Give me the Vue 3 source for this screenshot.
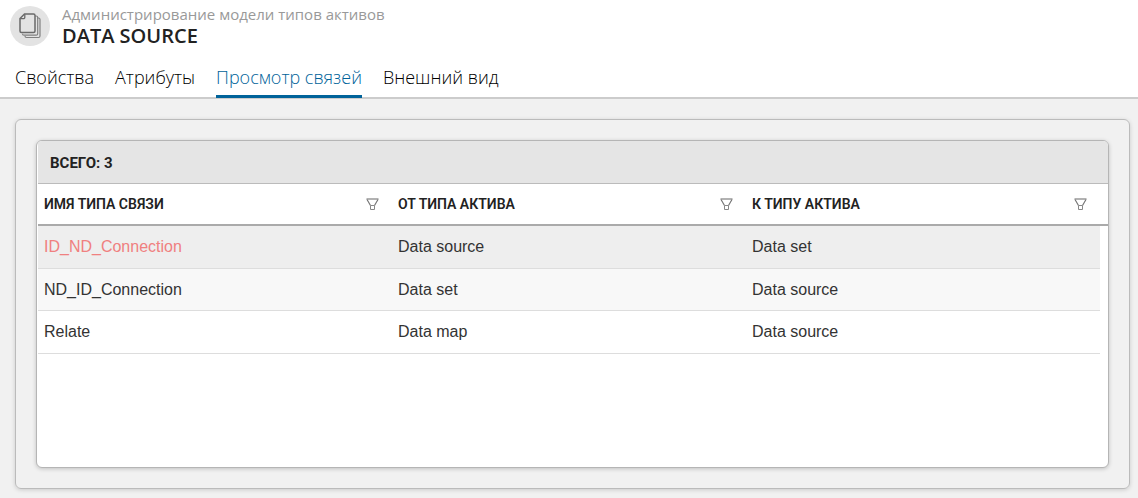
<script setup>
import { ref } from 'vue'

const tabs = ['Свойства', 'Атрибуты', 'Просмотр связей', 'Внешний вид']
const activeTab = ref(2)
const columns = ['Имя типа связи', 'От типа актива', 'К типу актива']
const rows = [
  ['ID_ND_Connection', 'Data source', 'Data set'],
  ['ND_ID_Connection', 'Data set', 'Data source'],
  ['Relate', 'Data map', 'Data source'],
]
const selected = ref(0)
</script>

<template>
  <div class="page">
    <header class="head">
      <div class="badge">
        <svg width="22" height="26" viewBox="0 0 22 26" fill="none" stroke="#6a6a6a" aria-hidden="true">
          <path d="M18 5h1.500q1.500 0 1.500 1.500V23q0 1.500-1.500 1.500H7.500q-1.500 0-1.500-1.500" stroke="#808080" stroke-width="1.200" />
          <path d="M16 3h1.200q1.500 0 1.500 1.500V20.700q0 1.500-1.500 1.500H5q-1.500 0-1.500-1.500" stroke="#808080" stroke-width="1.200" />
          <path d="M5.500 1H14.500q1.500 0 1.500 1.500V18q0 1.500-1.500 1.500H2.500q-1.500 0-1.500-1.500V5.500z" fill="#e3e3e3" stroke-width="1.500" />
          <path d="M5.800 1.200v3q0 1.500-1.500 1.500H1.200" stroke-width="1.300" />
        </svg>
      </div>
      <div>
        <div class="kind">Администрирование модели типов активов</div>
        <h1>DATA SOURCE</h1>
      </div>
    </header>

    <nav class="tabs" role="tablist">
      <button
        v-for="(tab, i) in tabs"
        :key="tab"
        type="button"
        role="tab"
        class="tab"
        :class="{ active: i === activeTab }"
        :aria-selected="i === activeTab"
        @click="activeTab = i"
      >{{ tab }}</button>
    </nav>

    <main class="content">
      <section class="panel">
        <div class="card">
          <div class="total">ВСЕГО: {{ rows.length }}</div>
          <table>
            <thead>
              <tr>
                <th v-for="column in columns" :key="column" scope="col">
                  <div class="th">
                    <span>{{ column }}</span>
                    <button type="button" class="filter" :aria-label="'Фильтр: ' + column">
                      <svg width="13" height="12" viewBox="0 0 13 12" fill="none" aria-hidden="true">
                        <path d="M.5 1h12" stroke="#999" stroke-width="1.500" />
                        <path d="M1 1.500l3.500 6M12 1.500l-3.500 6" stroke="#777" stroke-width="1.200" />
                        <path d="M4.500 7.500v4h4v-4z" stroke="#888" />
                      </svg>
                    </button>
                  </div>
                </th>
                <th class="gutter" aria-hidden="true"></th>
              </tr>
            </thead>
            <tbody>
              <tr v-for="(row, i) in rows" :key="row[0]" :class="{ selected: i === selected }" @click="selected = i">
                <td v-for="(cell, j) in row" :key="j">{{ cell }}</td>
                <td class="gutter"></td>
              </tr>
            </tbody>
          </table>
        </div>
      </section>
    </main>
  </div>
</template>

<style>
body {
  margin: 0;
  background: #f1f1f1;
}
</style>

<style scoped>
* {
  box-sizing: border-box;
}
.page {
  display: flex;
  flex-direction: column;
  min-height: 100vh;
  background: #f1f1f1;
  color: #222;
  font-family: "Open Sans", "Noto Sans", sans-serif;
}
.head {
  display: flex;
  gap: 12px;
  padding: 6px 10px 0;
  height: 56px;
  background: #fff;
}
.badge {
  display: flex;
  align-items: center;
  justify-content: center;
  width: 40px;
  height: 40px;
  border-radius: 50%;
  background: #e3e3e3;
}
.kind {
  font-size: 15px;
  line-height: 16px;
  color: #999;
}
h1 {
  margin: 0;
  font-size: 20px;
  line-height: 28px;
  font-weight: 600;
}
.tabs {
  display: flex;
  gap: 21px;
  padding: 0 15px;
  background: #fff;
  border-bottom: 2px solid #ccc;
}
.tab {
  height: 42px;
  margin-bottom: -1px;
  padding: 2px 0 0;
  border: 0;
  border-bottom: 3px solid transparent;
  background: none;
  font-family: inherit;
  font-size: 18px;
  line-height: 24px;
  font-weight: 300;
  color: #000;
  cursor: pointer;
}
.tab.active {
  color: #00639a;
  border-bottom-color: #00639a;
}
.content {
  flex: 1;
  display: flex;
  padding: 20px 8px 9px 15px;
}
.panel {
  flex: 1;
  display: flex;
  padding: 20px;
  border: 1px solid #bbb;
  border-radius: 6px;
  box-shadow: 0 1px 4px rgba(0, 0, 0, 0.16);
}
.card {
  flex: 1;
  padding-left: 1px;
  border: 1px solid #b5b5b5;
  border-radius: 6px;
  background: #fff;
  overflow: hidden;
  box-shadow: 0 1px 4px rgba(0, 0, 0, 0.2);
}
.total {
  height: 43px;
  padding: 0 12px;
  border-bottom: 1px solid #bbb;
  background: #e5e5e5;
  font-family: Roboto, sans-serif;
  font-size: 15px;
  line-height: 44px;
  font-weight: 700;
}
table {
  width: 100%;
  border-collapse: separate;
  border-spacing: 0;
  table-layout: fixed;
}
th {
  height: 42px;
  padding: 0 13px 0 6px;
  border-bottom: 2px solid #aaa;
  text-align: left;
  font-family: Roboto, sans-serif;
  font-size: 14px;
  line-height: 20px;
  font-weight: 600;
  text-transform: uppercase;
}
.th {
  display: flex;
  align-items: center;
  justify-content: space-between;
  white-space: nowrap;
}
.filter {
  display: flex;
  padding: 0;
  border: 0;
  background: none;
  cursor: pointer;
}
td {
  height: 43px;
  padding: 0 6px;
  border-bottom: 1px solid #ddd;
  font-family: "Liberation Sans", Arial, sans-serif;
  font-size: 16px;
  line-height: 20px;
  color: #333;
}
tbody tr:nth-child(even) td {
  height: 42px;
  background: #f8f8f8;
}
tbody tr.selected td {
  background: #eee;
}
tbody tr.selected td:first-child {
  color: #f08080;
}
th.gutter {
  width: 8px;
  padding: 0;
}
tbody tr td.gutter {
  padding: 0;
  border-bottom: 0;
  background: #fff;
}
</style>
